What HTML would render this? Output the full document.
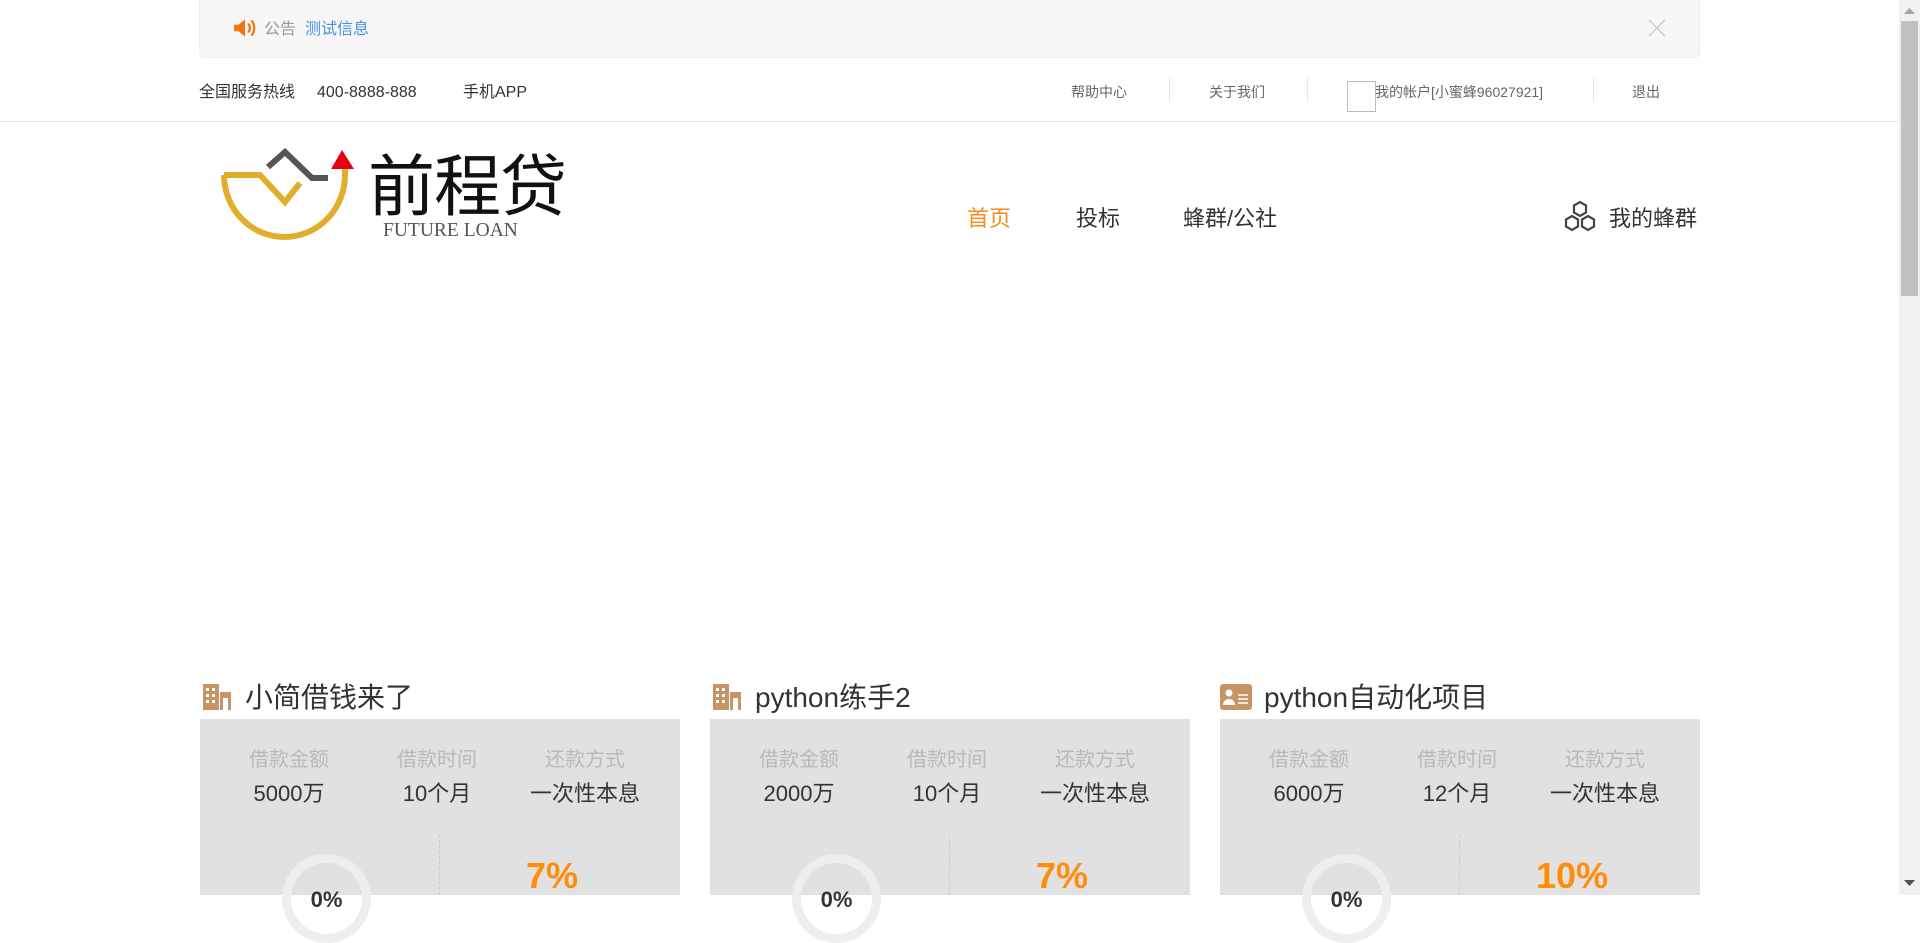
<!DOCTYPE html>
<html><head><meta charset="utf-8"><style>
*{margin:0;padding:0;box-sizing:border-box}
body{width:1920px;height:895px;overflow:hidden;background:#fff;font-family:"Liberation Sans","Noto Sans CJK SC",sans-serif;position:relative;color:#333}
.a{position:absolute;white-space:nowrap;line-height:1.2}
.notice{left:199px;top:0;width:1501px;height:58px;background:#f7f7f7;border:1px solid #eee;border-top:none;border-radius:0 0 6px 6px}
.sep{position:absolute;top:78px;width:1px;height:24px;background:#e5e5e5}
.card{position:absolute;top:719px;width:480px;height:176px;background:#e1e1e1;line-height:1.2}
.lab{position:absolute;top:29px;width:148px;text-align:center;font-size:20px;color:#b9b9b9}
.val{position:absolute;top:62px;width:148px;text-align:center;font-size:22px;color:#333}
.ring{position:absolute;left:82px;top:135px;width:89px;height:89px;border-radius:50%;border:9px solid #eee}
.pc{position:absolute;left:82px;top:168px;width:89px;text-align:center;font-size:22px;font-weight:bold;color:#333}
.dash{position:absolute;left:239px;top:116px;height:60px;border-left:1px dashed #ccc}
.rate{position:absolute;left:240px;width:224px;text-align:center;top:135px;font-size:36px;font-weight:bold;color:#ff8c0a}
.ttl{position:absolute;top:681px;font-size:28px;color:#333;line-height:1.2}
</style></head><body>
<div class="a notice"></div>
<svg class="a" style="left:233px;top:17px" width="24" height="22" viewBox="0 0 22 20"><path d="M1 7h4l6-5v16l-6-5H1z" fill="#f7730e"/><path d="M14 6q3 4 0 8M17 3q5 7 0 14" stroke="#f7730e" stroke-width="2" fill="none"/></svg>
<div class="a" style="left:264px;top:20px;font-size:16px;color:#999">公告</div>
<div class="a" style="left:305px;top:20px;font-size:16px;color:#4a90e2">测试信息</div>
<svg class="a" style="left:1647px;top:18px" width="20" height="20"><path d="M2 2L18 18M18 2L2 18" stroke="#ccc" stroke-width="1.5"/></svg>
<div class="a" style="left:199px;top:83px;font-size:16px">全国服务热线</div>
<div class="a" style="left:317px;top:83px;font-size:16px">400-8888-888</div>
<div class="a" style="left:463px;top:83px;font-size:16px">手机APP</div>
<div class="a" style="left:1071px;top:84px;font-size:14px;color:#666">帮助中心</div>
<div class="sep" style="left:1169px"></div>
<div class="a" style="left:1209px;top:84px;font-size:14px;color:#666">关于我们</div>
<div class="sep" style="left:1307px"></div>
<div class="a" style="left:1347px;top:81px;width:29px;height:31px;border:1px solid #bbb"></div>
<div class="a" style="left:1375px;top:84px;font-size:14px;color:#666">我的帐户[小蜜蜂96027921]</div>
<div class="sep" style="left:1593px"></div>
<div class="a" style="left:1632px;top:84px;font-size:14px;color:#666">退出</div>
<div class="a" style="left:0;top:121px;width:1899px;height:1px;background:#e8e8e8"></div>
<svg class="a" style="left:219px;top:148px" width="140" height="94" viewBox="0 0 140 94"><path d="M5 27H41L66 54L81 35" stroke="#e0ae2c" stroke-width="6" fill="none"/><path d="M5 27A60.5 62 0 0 0 126 27V18" stroke="#e0ae2c" stroke-width="6" fill="none"/><path d="M49 19L66 4L93 30H109" stroke="#555" stroke-width="6" fill="none"/><path d="M123 2L112 21H135z" fill="#e60012"/></svg>
<div class="a" style="left:368px;top:148px;font-size:67px;color:#111;letter-spacing:-1px;line-height:80px">前程贷</div>
<div class="a" style="left:383px;top:219px;font-size:19.5px;color:#555;font-family:'Liberation Serif',serif">FUTURE LOAN</div>
<div class="a" style="left:967px;top:206px;font-size:22px;color:#f98a1d">首页</div>
<div class="a" style="left:1076px;top:206px;font-size:22px">投标</div>
<div class="a" style="left:1183px;top:206px;font-size:22px">蜂群/公社</div>
<svg class="a" style="left:1563px;top:200px" width="34" height="34" viewBox="0 0 34 34"><g stroke="#444" stroke-width="2.2" fill="none"><path d="M17 2l6 3.5v7L17 16l-6-3.5v-7z"/><path d="M9 16l6 3.5v7L9 30l-6-3.5v-7z"/><path d="M25 16l6 3.5v7L25 30l-6-3.5v-7z"/></g></svg>
<div class="a" style="left:1609px;top:206px;font-size:22px">我的蜂群</div>

<svg class="a" style="left:203px;top:684px" width="28" height="26"><rect x="0" y="0" width="16" height="26" fill="#c79468"/><rect x="17" y="8" width="11" height="18" fill="#c79468"/><g fill="#fff"><rect x="3" y="4" width="3" height="3"/><rect x="9" y="4" width="3" height="3"/><rect x="3" y="10" width="3" height="3"/><rect x="9" y="10" width="3" height="3"/><rect x="3" y="16" width="3" height="3"/><rect x="9" y="16" width="3" height="3"/><rect x="20" y="14" width="5" height="12"/></g></svg>
<div class="ttl" style="left:245px">小简借钱来了</div>
<svg class="a" style="left:713px;top:684px" width="28" height="26"><rect x="0" y="0" width="16" height="26" fill="#c79468"/><rect x="17" y="8" width="11" height="18" fill="#c79468"/><g fill="#fff"><rect x="3" y="4" width="3" height="3"/><rect x="9" y="4" width="3" height="3"/><rect x="3" y="10" width="3" height="3"/><rect x="9" y="10" width="3" height="3"/><rect x="3" y="16" width="3" height="3"/><rect x="9" y="16" width="3" height="3"/><rect x="20" y="14" width="5" height="12"/></g></svg>
<div class="ttl" style="left:755px">python练手2</div>
<svg class="a" style="left:1220px;top:684px" width="32" height="26"><rect width="32" height="26" rx="3" fill="#c79468"/><circle cx="9" cy="9" r="3.5" fill="#fff"/><path d="M3 21a6 6 0 0 1 12 0z" fill="#fff"/><path d="M18 11h10M18 15h10M18 19h10" stroke="#fff" stroke-width="1.6"/></svg>
<div class="ttl" style="left:1264px">python自动化项目</div>

<div class="card" style="left:200px">
<div class="lab" style="left:15px">借款金额</div><div class="lab" style="left:163px">借款时间</div><div class="lab" style="left:311px">还款方式</div>
<div class="val" style="left:15px">5000万</div><div class="val" style="left:163px">10个月</div><div class="val" style="left:311px">一次性本息</div>
<div class="ring"></div><div class="pc">0%</div><div class="dash"></div><div class="rate">7%</div></div>
<div class="card" style="left:710px">
<div class="lab" style="left:15px">借款金额</div><div class="lab" style="left:163px">借款时间</div><div class="lab" style="left:311px">还款方式</div>
<div class="val" style="left:15px">2000万</div><div class="val" style="left:163px">10个月</div><div class="val" style="left:311px">一次性本息</div>
<div class="ring"></div><div class="pc">0%</div><div class="dash"></div><div class="rate">7%</div></div>
<div class="card" style="left:1220px">
<div class="lab" style="left:15px">借款金额</div><div class="lab" style="left:163px">借款时间</div><div class="lab" style="left:311px">还款方式</div>
<div class="val" style="left:15px">6000万</div><div class="val" style="left:163px">12个月</div><div class="val" style="left:311px">一次性本息</div>
<div class="ring"></div><div class="pc">0%</div><div class="dash"></div><div class="rate">10%</div></div>

<div class="a" style="left:1899px;top:0;width:21px;height:895px;background:#f1f1f1"></div>
<div class="a" style="left:1901px;top:21px;width:17px;height:275px;background:#c1c1c1"></div>
<svg class="a" style="left:1904px;top:8px" width="11" height="7"><path d="M0 6L5.5 0L11 6z" fill="#a3a3a3"/></svg>
<svg class="a" style="left:1904px;top:880px" width="11" height="7"><path d="M0 0L5.5 6L11 0z" fill="#505050"/></svg>
</body></html>
